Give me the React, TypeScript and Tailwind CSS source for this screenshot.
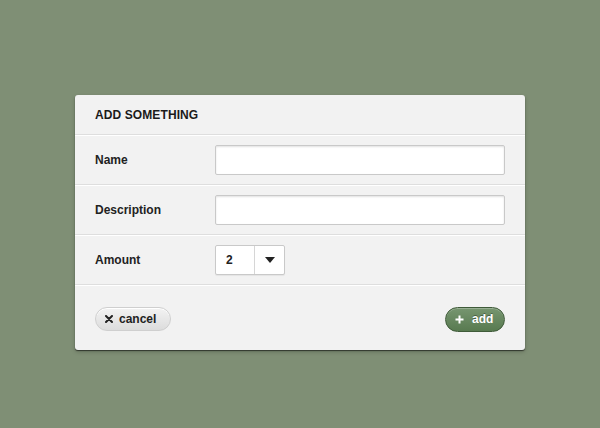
import React from "react";

const font = { fontFamily: '"Liberation Sans", Arial, sans-serif' };

const Row = ({ label, children }: { label: string; children: React.ReactNode }) => (
  <div className="flex h-[50px] items-center border-t border-b border-t-white border-b-[#dedede] px-5">
    <label className="w-[120px] text-[12px] font-bold text-[#222]">{label}</label>
    {children}
  </div>
);

const TextInput = () => (
  <input
    type="text"
    className="h-[30px] w-[290px] rounded-[2px] border border-[#c9c9c9] bg-white px-2 text-[12px] shadow-[inset_0_1px_2px_rgba(0,0,0,0.12)] outline-none"
  />
);

export default function App() {
  return (
    <div className="flex h-[428px] w-full justify-center bg-[#7f8f75] pt-[95px]" style={font}>
      <div className="flex h-[255px] w-[450px] flex-col overflow-hidden rounded-[3px] bg-[#f2f2f2] shadow-[0_1px_1px_rgba(0,0,0,0.55),0_2px_4px_rgba(0,0,0,0.2)]">
        {/* Header */}
        <div className="flex h-[40px] shrink-0 items-center border-b border-[#dedede] px-5">
          <h2 className="text-[12px] font-bold uppercase tracking-[0.1px] text-[#1a1a1a]">Add Something</h2>
        </div>

        <Row label="Name">
          <TextInput />
        </Row>
        <Row label="Description">
          <TextInput />
        </Row>
        <Row label="Amount">
          <div className="flex h-[30px] w-[70px] rounded-[2px] border border-[#c9c9c9] bg-white shadow-[0_1px_1px_rgba(0,0,0,0.06)]">
            <span className="flex w-[38px] items-center pl-[10px] text-[12px] font-bold text-[#222]">2</span>
            <span className="flex flex-1 items-center justify-center border-l border-[#d6d6d6]">
              <svg width="10" height="6" viewBox="0 0 10 6">
                <path d="M0 0h10L5 6z" fill="#222" />
              </svg>
            </span>
          </div>
        </Row>

        {/* Footer */}
        <div className="flex flex-1 items-center justify-between border-t border-white px-5 pt-[2px]">
          <button className="flex h-[24px] w-[76px] items-center gap-[6px] rounded-full border border-[#cfcfcf] bg-gradient-to-b from-[#f3f3f3] to-[#dcdcdc] pl-[9px] text-[12px] font-bold text-[#222] shadow-[inset_0_1px_0_#fff]">
            <svg width="8" height="8" viewBox="0 0 8 8">
              <path d="M1 1l6 6M7 1L1 7" stroke="#222" strokeWidth="2" strokeLinecap="round" />
            </svg>
            cancel
          </button>
          <button className="flex h-[25px] w-[60px] items-center gap-[8px] rounded-full border border-[#3f5b39] bg-gradient-to-b from-[#779670] to-[#587a50] pl-[9px] text-[12px] font-bold text-white shadow-[inset_0_1px_0_rgba(255,255,255,0.25)] [text-shadow:0_-1px_0_rgba(0,0,0,0.35)]">
            <svg width="9" height="9" viewBox="0 0 9 9">
              <path d="M4.5 0.5v8M0.5 4.5h8" stroke="#fff" strokeWidth="2" />
            </svg>
            add
          </button>
        </div>
      </div>
    </div>
  );
}
